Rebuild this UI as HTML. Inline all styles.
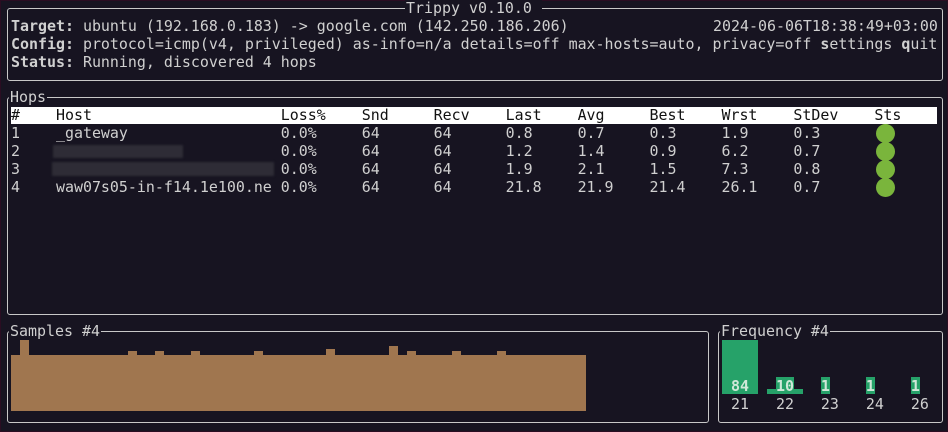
<!DOCTYPE html>
<html><head><style>
body{margin:0;width:948px;height:432px;background:#171421;overflow:hidden;position:relative;font-family:"DejaVu Sans Mono","Liberation Mono",monospace;font-size:14.95px;color:#d0d0d0}
.t{position:absolute;white-space:pre;line-height:18px}
.box{position:absolute;border:1px solid #c8c8c8;border-radius:3px}
.lbl{position:absolute;background:#171421;white-space:pre;line-height:16px;padding:0 1px}
b{font-weight:bold}
.r{position:absolute}
.c{position:absolute;width:19px;height:19px;border-radius:50%;background:#7ab53c;left:876px}
</style></head><body>
<div style="position:absolute;inset:0;border:1px solid #2a0d22"></div>
<div class="box" style="left:7px;top:8px;width:934px;height:71px"></div>
<div class="lbl" style="left:405px;top:0px">Trippy v0.10.0 </div>
<div class="t" style="left:11px;top:17px"><b>Target:</b> ubuntu (192.168.0.183) -&gt; google.com (142.250.186.206)</div>
<div class="t" style="left:713px;top:17px">2024-06-06T18:38:49+03:00</div>
<div class="t" style="left:11px;top:35px"><b>Config:</b> protocol=icmp(v4, privileged) as-info=n/a details=off max-hosts=auto, privacy=off <b>s</b>ettings <b>q</b>uit</div>
<div class="t" style="left:11px;top:53px"><b>Status:</b> Running, discovered 4 hops</div>

<div class="box" style="left:7px;top:97px;width:934px;height:216px"></div>
<div class="lbl" style="left:9px;top:89px">Hops</div>
<div class="r" style="left:11px;top:107px;width:926px;height:17px;background:#fff"></div>
<div class="t" style="left:11px;top:106px;color:#111">#    Host                     Loss%    Snd     Recv    Last    Avg     Best    Wrst    StDev    Sts</div>
<div class="t" style="left:11px;top:124px">1    _gateway                 0.0%     64      64      0.8     0.7     0.3     1.9     0.3</div>
<div class="t" style="left:11px;top:142px">2                             0.0%     64      64      1.2     1.4     0.9     6.2     0.7</div>
<div class="t" style="left:11px;top:160px">3                             0.0%     64      64      1.9     2.1     1.5     7.3     0.8</div>
<div class="t" style="left:11px;top:178px">4    waw07s05-in-f14.1e100.ne 0.0%     64      64      21.8    21.9    21.4    26.1    0.7</div>
<div class="r" style="left:53px;top:145px;width:130px;height:13px;background:#2e2c36;filter:blur(1px)"></div>
<div class="r" style="left:52px;top:162px;width:222px;height:14px;background:#2e2c36;filter:blur(1px)"></div>
<div class="c" style="top:124px"></div><div class="c" style="top:142px"></div><div class="c" style="top:160px"></div><div class="c" style="top:178px"></div>

<div class="box" style="left:7px;top:331px;width:700px;height:90px"></div>
<div class="lbl" style="left:9px;top:323px">Samples #4</div>
<div class="r" style="left:11px;top:355px;width:575px;height:56px;background:#a0764f"></div>
<div class="r" style="left:20px;top:340px;width:9px;height:16px;background:#a0764f"></div>
<div class="r" style="left:128px;top:351px;width:9px;height:5px;background:#a0764f"></div>
<div class="r" style="left:155px;top:351px;width:9px;height:5px;background:#a0764f"></div>
<div class="r" style="left:191px;top:351px;width:9px;height:5px;background:#a0764f"></div>
<div class="r" style="left:254px;top:351px;width:9px;height:5px;background:#a0764f"></div>
<div class="r" style="left:326px;top:349px;width:9px;height:7px;background:#a0764f"></div>
<div class="r" style="left:389px;top:346px;width:9px;height:10px;background:#a0764f"></div>
<div class="r" style="left:407px;top:351px;width:9px;height:5px;background:#a0764f"></div>
<div class="r" style="left:452px;top:351px;width:9px;height:5px;background:#a0764f"></div>
<div class="r" style="left:497px;top:351px;width:9px;height:5px;background:#a0764f"></div>

<div class="box" style="left:718px;top:331px;width:223px;height:90px"></div>
<div class="lbl" style="left:720px;top:323px">Frequency #4</div>
<div class="r" style="left:722px;top:340px;width:36px;height:54px;background:#26a269"></div>
<div class="r" style="left:767px;top:389px;width:36px;height:5px;background:#26a269"></div>
<div class="r" style="left:776px;top:377px;width:18px;height:17px;background:#26a269"></div>
<div class="r" style="left:821px;top:377px;width:9px;height:17px;background:#26a269"></div>
<div class="r" style="left:866px;top:377px;width:9px;height:17px;background:#26a269"></div>
<div class="r" style="left:911px;top:377px;width:9px;height:17px;background:#26a269"></div>
<div class="t" style="left:731px;top:377px;color:#cfe8d8;font-weight:bold">84   10   1    1    1</div>
<div class="t" style="left:731px;top:395px">21   22   23   24   26</div>
</body></html>
